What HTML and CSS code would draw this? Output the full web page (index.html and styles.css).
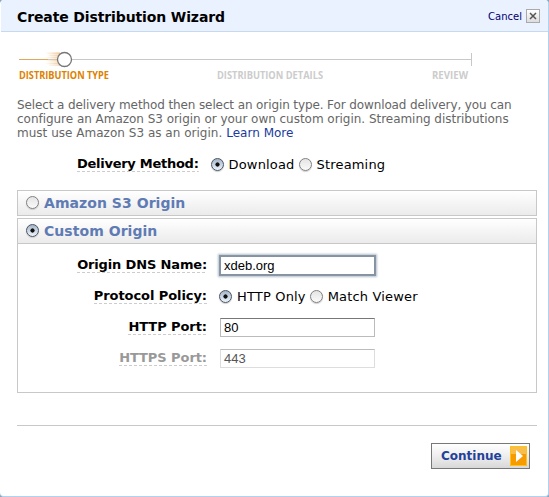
FILE: index.html
```html
<!DOCTYPE html>
<html lang="en">
<head>
<meta charset="utf-8">
<title>Create Distribution Wizard</title>
<link rel="stylesheet" href="styles.css">
</head>
<body>
<main class="dialog">
  <header class="head">
    <h1>Create Distribution Wizard</h1>
    <a class="cancel">Cancel</a>
    <span class="close"><svg width="8" height="8" viewBox="0 0 8 8"><path d="M1 1l6 6M7 1l-6 6" stroke="#555" stroke-width="1.5"/></svg></span>
  </header>
  <svg class="steps" width="532" height="60" viewBox="0 0 532 60">
    <defs><linearGradient id="trail"><stop offset="0" stop-color="#f5c98a" stop-opacity="0"/><stop offset="1" stop-color="#e9b478" stop-opacity=".75"/></linearGradient></defs>
    <path d="M19 27.500H471.500M471.500 21V34" stroke="#c8c8c8" fill="none"/>
    <path d="M19 27.500H48" stroke="#e2a75c"/>
    <path d="M46 20h14v2H46zM49 23h10v1H49zM44 25h14v1H44zM45 28h13v1H45zM44 31h15v1H44zM49 33h11v1H49z" fill="url(#trail)" opacity=".6"/>
    <path d="M46 21h14v12H46z" fill="url(#trail)" opacity=".6"/>
    <circle cx="64.500" cy="27.500" r="7" fill="#fff" stroke="#777" stroke-width="1.300"/>
    <g class="step-text">
      <text x="19" y="47" textLength="90" lengthAdjust="spacingAndGlyphs" class="active">DISTRIBUTION TYPE</text>
      <text x="217" y="47" textLength="106" lengthAdjust="spacingAndGlyphs">DISTRIBUTION DETAILS</text>
      <text x="432" y="47" textLength="36" lengthAdjust="spacingAndGlyphs">REVIEW</text>
    </g>
  </svg>
  <p class="intro"><span class="first">Select a delivery method then select an origin type. For download delivery, you can</span><br><span class="second">configure an Amazon S3 origin or your own custom origin. Streaming distributions</span><br><span>must use Amazon S3 as an origin. <a>Learn More</a></span></p>
  <div class="row delivery">
    <span class="label">Delivery Method:</span>
    <i class="radio on"></i><span class="opt">Download</span><i class="radio"></i><span class="opt">Streaming</span>
  </div>
  <section class="panel"><h2><i class="radio"></i><span>Amazon S3 Origin</span></h2></section>
  <section class="panel open">
    <h2><i class="radio on"></i><span>Custom Origin</span></h2>
    <div class="row"><span class="label dns">Origin DNS Name:</span><span class="field focus">xdeb.org</span></div>
    <div class="row"><span class="label">Protocol Policy:</span><i class="radio on"></i><span class="opt">HTTP Only</span><i class="radio"></i><span class="opt">Match Viewer</span></div>
    <div class="row"><span class="label">HTTP Port:</span><span class="field">80</span></div>
    <div class="row off"><span class="label">HTTPS Port:</span><span class="field">443</span></div>
  </section>
  <footer class="foot">
    <button class="go"><span>Continue</span><svg width="17" height="20" viewBox="0 0 17 20"><path fill="#f9bd4b" d="M0 0h17v8H0z"/><path fill="#f79b00" d="M0 8h17v12H0z"/><path d="M.5.5h16v19H.5z" fill="none" stroke="#fcc31d"/><path d="M6 4l7 6-7 6z" fill="#fff"/></svg></button>
  </footer>
</main>
</body>
</html>
```
FILE: styles.css
```css
* { box-sizing: border-box; }
body { margin: 0; background: #86a3bd; font: 13px "DejaVu Sans", sans-serif; color: #000; overflow: hidden; }
.dialog { width: 549px; height: 497px; background: #fff; border: solid #b2d0f0; border-width: 0 1px 1px 0; border-radius: 4px; overflow: hidden; }
.head { display: flex; align-items: center; height: 32px; padding: 1px 8px 0 16px; background: #eaf1ff; border-bottom: 1px solid #c5daf1; margin-left: 1px; }
h1 { margin: 1px auto 0 0; font-size: 14px; font-weight: bold; letter-spacing: -.12px; }
.cancel { font-size: 10px; color: #000070; margin-right: 4px; }
.close { width: 14px; height: 14px; border: 1px solid #aaa; background: linear-gradient(#fff, #ddd); display: flex; align-items: center; justify-content: center; }
.steps { display: block; }
.step-text { font: bold 11px "Open Sans", sans-serif; fill: #ccc; }
.active { fill: #dc8200; }
.intro { margin: 6px 0 0 17px; line-height: 14px; font-size: 12px; letter-spacing: .02px; color: #666; white-space: nowrap; }
.intro a { color: #1b3a9e; }
.first { letter-spacing: -.11px; }
.second { letter-spacing: -.03px; }
.row { display: flex; align-items: center; height: 31px; white-space: nowrap; }
.label { font-weight: bold; letter-spacing: -.07px; line-height: 15px; height: 16px; margin: 0 0 1px auto; background: repeating-linear-gradient(90deg, #ccc 0 3px, transparent 3px 5px) bottom/100% 1px no-repeat; }
.delivery { margin-top: 9px; }
.delivery .label { margin-left: 77px; margin-right: 12px; letter-spacing: -.27px; }
.radio { flex: none; width: 13px; height: 13px; margin-bottom: 1px; border: 1px solid #808080; border-radius: 50%; background: linear-gradient(#e4e4e4, #fafafa); box-shadow: 0 1px 1px #ccc; }
.radio.on { border-color: #4a5462; background: radial-gradient(circle, #111 0 1.800px, transparent 2.400px), linear-gradient(#a4b4c8, #eef5fc); }
.opt { margin: 0 4px 0 5px; letter-spacing: .17px; }
.panel { width: 520px; margin: 10px 0 0 17px; border: 1px solid #c8c8c8; }
.panel.open { margin-top: 2px; height: 175px; }
h2 { margin: 0; height: 24px; padding: 0 0 1px 8px; display: flex; align-items: center; gap: 5px; font-size: 14px; letter-spacing: .05px; color: #5f7bb4; background: linear-gradient(#fff, #ebebeb); }
h2 .radio { margin: 0; }
.open h2 { height: 25px; border-bottom: 1px solid #c8c8c8; margin-bottom: 6px; }
.open .row { display: grid; grid-template-columns: 189px 12px auto auto auto auto; justify-content: start; }
.open .label { justify-self: end; }
.open .dns { letter-spacing: -.15px; }
.open .label + * { grid-column: 3; }
.open .opt { margin-top: -1px; }
.field { width: 155px; height: 19px; border: 1px solid #bbb; border-top-color: #777; padding: 0 3px; font: 13px/18px "Liberation Sans", sans-serif; margin-left: 1px; }
.focus { border-color: #8492a2; box-shadow: 0 0 0 1px #8895a4, 0 0 2px 2px #b4bfca; }
.off .label { color: #999; }
.off .field { border-color: #ddd; border-top-color: #bbb; color: #555; }
.foot { width: 520px; margin: 32px 0 0 17px; border-top: 1px solid #c8c8c8; display: flex; justify-content: flex-end; padding: 17px 7px 0 0; }
.go { width: 99px; height: 26px; padding: 0 2px 0 9px; display: flex; align-items: center; justify-content: space-between; border: 1px solid #777; background: linear-gradient(#fff, #eee 50%, #d8d8d8); font: bold 12px "DejaVu Sans", sans-serif; color: #23409a; }
```
